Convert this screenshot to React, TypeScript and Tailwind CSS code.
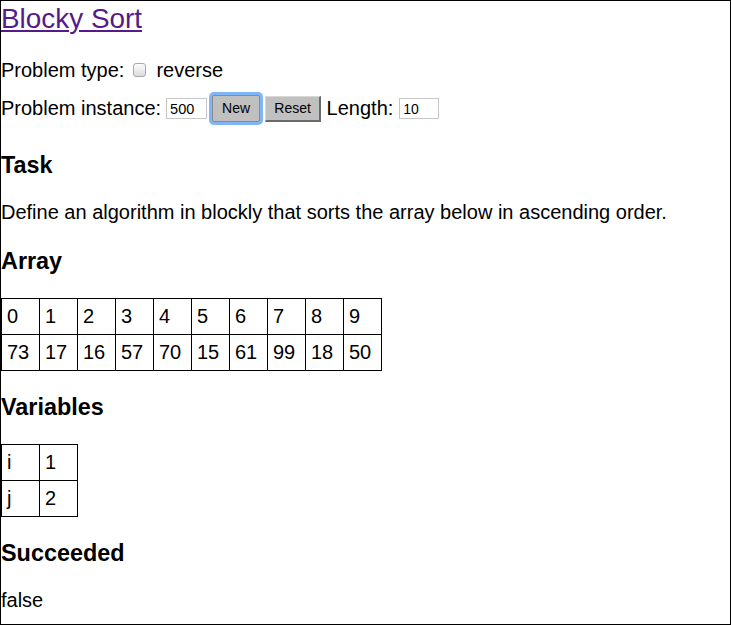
import React, { useState } from 'react';

const arrayValues = [73, 17, 16, 57, 70, 15, 61, 99, 18, 50];
const variables: [string, number][] = [
  ['i', 1],
  ['j', 2],
];

export default function App() {
  const [reverse, setReverse] = useState(false);
  const [instance, setInstance] = useState('500');
  const [length, setLength] = useState('10');

  return (
    <div className="w-[731px] h-[625px] border border-black overflow-hidden bg-white text-black font-['Liberation_Sans',Arial,sans-serif] text-[20px]">
      <a href="#" className="block w-fit mt-[1.5px] text-[27.9px] leading-[32px] text-[#551a8b] underline">
        Blocky Sort
      </a>

      {/* Problem type */}
      <div className="flex items-center h-[28px] mt-[21.7px] leading-[23px]">
        <span>Problem type:</span>
        <input
          type="checkbox"
          checked={reverse}
          onChange={(e) => setReverse(e.target.checked)}
          className="appearance-none ml-[9px] w-[13px] h-[14px] rounded-[3px] border border-[#a9a9a9] bg-gradient-to-b from-[#fbfbfb] to-[#dcdcdc]"
        />
        <span className="ml-[10px]">reverse</span>
      </div>

      {/* Problem instance */}
      <div className="flex items-center h-[34px] mt-[7.5px] leading-[23px]">
        <span>Problem instance:</span>
        <input
          value={instance}
          onChange={(e) => setInstance(e.target.value)}
          className="ml-[5px] w-[41px] h-[21px] border border-[#c6c6c6] px-[3px] text-[14.5px] leading-[19px] outline-none font-['Liberation_Sans',Arial,sans-serif]"
        />
        <button className="ml-[5px] w-[48px] h-[27px] rounded-[2px] border border-[#8a8a8a] bg-[#c0c0c0] text-[14px] shadow-[0_0_0_3px_#80b5f7]">
          New
        </button>
        <button className="ml-[5px] w-[56px] h-[26px] border-t border-l border-[#d8d8d8] border-r-2 border-b-2 border-r-[#6a6a6a] border-b-[#6a6a6a] bg-[#c0c0c0] text-[14px]">
          Reset
        </button>
        <span className="ml-[5.5px]">Length:</span>
        <input
          value={length}
          onChange={(e) => setLength(e.target.value)}
          className="ml-[6px] w-[40px] h-[21px] border border-[#c6c6c6] px-[3px] text-[14px] leading-[19px] outline-none font-['Liberation_Sans',Arial,sans-serif]"
        />
      </div>

      <h3 className="mt-[26.8px] text-[23.4px] leading-[27px] font-bold">Task</h3>
      <p className="mt-[22px] leading-[23px]">
        Define an algorithm in blockly that sorts the array below in ascending order.
      </p>

      <h3 className="mt-[24px] text-[23.4px] leading-[27px] font-bold">Array</h3>
      <table className="mt-[22.5px] border-collapse">
        <tbody>
          <tr>
            {arrayValues.map((_, i) => (
              <td key={i} className="border border-black w-[38px] h-[36px] px-[5px] py-0 leading-[23px]">
                {i}
              </td>
            ))}
          </tr>
          <tr>
            {arrayValues.map((v, i) => (
              <td key={i} className="border border-black w-[38px] h-[36px] px-[5px] py-0 leading-[23px]">
                {v}
              </td>
            ))}
          </tr>
        </tbody>
      </table>

      <h3 className="mt-[23.5px] text-[23.4px] leading-[27px] font-bold">Variables</h3>
      <table className="mt-[22.5px] border-collapse">
        <tbody>
          {variables.map(([name, value]) => (
            <tr key={name}>
              <td className="border border-black w-[38px] h-[36px] px-[5px] py-0 leading-[23px]">{name}</td>
              <td className="border border-black w-[38px] h-[36px] px-[5px] py-0 leading-[23px]">{value}</td>
            </tr>
          ))}
        </tbody>
      </table>

      <h3 className="mt-[23px] text-[23.4px] leading-[27px] font-bold">Succeeded</h3>
      <p className="mt-[22.3px] leading-[23px]">false</p>
    </div>
  );
}
